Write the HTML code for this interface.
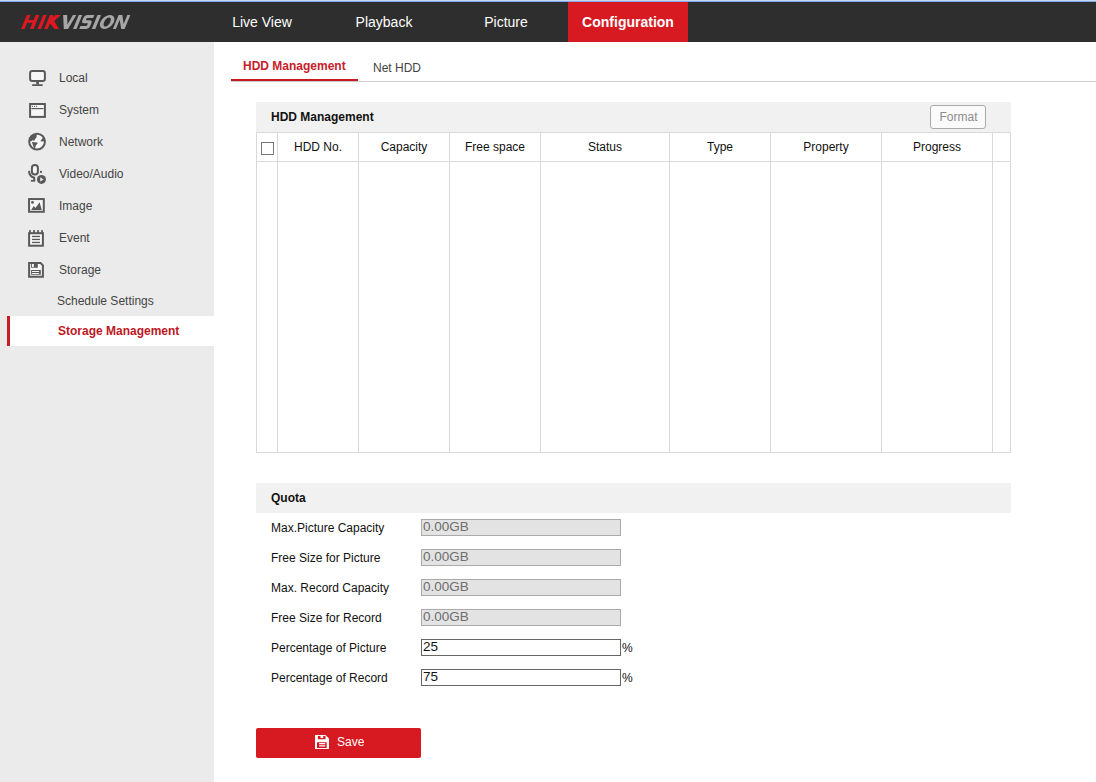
<!DOCTYPE html>
<html><head><meta charset="utf-8">
<style>
*{margin:0;padding:0;box-sizing:border-box}
html,body{width:1096px;height:782px;overflow:hidden;background:#fff;font-family:"Liberation Sans",sans-serif;font-size:12px;color:#333}
.abs{position:absolute}
#topline{left:0;top:0;width:1096px;height:2px;background:linear-gradient(#c9d7ef 0,#c9d7ef 1px,#80a6f2 1px,#80a6f2 2px)}
#header{left:0;top:2px;width:1096px;height:40px;background:#2e2e2e}
.nav{position:absolute;top:0;height:40px;line-height:40px;color:#fff;font-size:14px;text-align:center}
.nav.active{background:#d71921;font-weight:bold}
#sidebar{left:0;top:42px;width:214px;height:740px;background:#ebebeb}
.mi{position:absolute;left:59px;font-size:12px;color:#444}
.ic{position:absolute;left:28px}
.sub{position:absolute;font-size:12px;color:#444}
#selbar{left:7px;top:316px;width:207px;height:30px;background:#fff}
#selred{left:7px;top:316px;width:3px;height:30px;background:#c81e26}
.tab{position:absolute;font-size:12px}
.panelhead{position:absolute;left:256px;width:755px;height:30px;background:#f1f1f1}
.ptitle{position:absolute;left:15px;top:0;line-height:30px;font-weight:bold;color:#111}
.th{position:absolute;top:132px;height:30px;line-height:30px;text-align:center;color:#111}
.vl{position:absolute;top:132px;width:1px;height:320px;background:#d9d9d9}
.lbl{position:absolute;left:271px;color:#111}
.inp{position:absolute;left:421px;width:200px;height:17px;border:1px solid #aaa;background:#e3e3e3;color:#6e6e6e;font-size:13.5px;line-height:14px;padding-left:1px}
.inp.w{background:#fff;border-color:#666;color:#111}
.pct{position:absolute;left:622px;color:#111;font-size:12px}
</style></head><body>
<div id="topline" class="abs"></div>
<div id="header" class="abs">
  <svg class="abs" style="left:0;top:-2px" width="140" height="44" viewBox="0 0 140 44">
    <g transform="matrix(1,0,-0.41,1,5.74,15)">
      <g fill="#dc1820">
        <polygon points="21.1,0 24.7,0 24.7,4.9 29.9,4.9 29.9,0 33.6,0 33.6,14 29.9,14 29.9,7.8 24.7,7.8 24.7,14 21.1,14"/>
        <polygon points="37.5,0 41,0 41,14 37.5,14"/>
        <polygon points="44.2,0 47.8,0 47.8,2.3 50,0 55.3,0 50.9,6 59,14 54.6,14 47.8,8.6 47.8,14 44.2,14"/>
      </g>
      <g fill="#a6a6a6">
        <polygon points="57.4,0 61.4,0 65.6,9.6 67.2,0 70.6,0 68,14 63.8,14"/>
        <polygon points="73,0 76.5,0 76.5,14 73,14"/>
        <path d="M88.6,0 L81.5,0 Q78.8,0 78.8,2.7 L78.8,5.3 Q78.8,8.3 81.8,8.3 L85.5,8.3 Q85.6,8.3 85.6,9.3 L85.6,10.2 Q85.6,11 84.8,11 L79.2,11 L79.2,14 L86.4,14 Q89,14 89,11.3 L89,8.3 Q89,5.3 86,5.3 L82.8,5.3 Q82.2,5.3 82.2,4.5 L82.2,3.8 Q82.2,3 83,3 L88.6,3 Z"/>
        <polygon points="91.8,0 95.3,0 95.3,14 91.8,14"/>
        <path fill-rule="evenodd" d="M104.3,0 A6.7,7 0 1 1 104.29,0 Z M104.3,2.4 A3.1,4.6 0 1 0 104.31,2.4 Z"/>
        <polygon points="112.9,0 116.6,0 121.6,9 121.6,0 124.6,0 124.6,14 121.2,14 115.9,4.8 115.9,14 112.9,14"/>
      </g>
    </g>
  </svg>
  <div class="nav" style="left:202px;width:120px">Live View</div>
  <div class="nav" style="left:324px;width:120px">Playback</div>
  <div class="nav" style="left:446px;width:120px">Picture</div>
  <div class="nav active" style="left:568px;width:120px">Configuration</div>
</div>
<div id="sidebar" class="abs"></div>
<div id="selbar" class="abs"></div>
<div id="selred" class="abs"></div>

<svg class="abs" style="left:0;top:0" width="60" height="300" viewBox="0 0 60 300">
  <g fill="#f6f6f6" stroke="#595959" stroke-width="2">
    <rect x="30.1" y="70.9" width="14.8" height="10.1" rx="2.2"/>
    <rect x="30.1" y="104" width="14.8" height="12.9"/>
    <circle cx="37.05" cy="141.6" r="7.9"/>
    <rect x="31.9" y="165" width="6" height="9.6" rx="3"/>
    <path fill="none" d="M29,170.9 Q29.3,176.5 34.2,177.8 L34.2,180.6"/>
    <rect x="29.05" y="199.05" width="14.75" height="12.7"/>
    <rect x="29.1" y="233.2" width="13.8" height="12.5"/>
    <path d="M29.1,262.95 L40.6,262.95 L42.9,265.4 L42.9,276.7 L29.1,276.7 Z"/>
  </g>
  <g fill="#595959">
    <rect x="36.2" y="81.5" width="2.7" height="3"/>
    <rect x="32" y="84.2" width="10.9" height="1.8" rx="0.9"/>
    <rect x="31.5" y="108" width="12" height="1.2"/>
    <circle cx="32.5" cy="106.3" r="0.65"/><circle cx="34.5" cy="106.3" r="0.65"/><circle cx="36.6" cy="106.3" r="0.65"/>
    <path d="M29.5,139.8 L31,136.2 L33.5,134.2 L35.5,134 L36.8,135.6 L36.4,137.4 L35,139.3 L34.2,140.7 L32.4,140.3 L31.6,141 L30.1,141.4 Z"/>
    <path d="M31.9,142 L37.3,142.6 L37.6,143.5 L35.9,145.2 L35.4,146.9 L34.8,148.6 L33.6,146.9 L32.5,144.1 Z"/>
    <path d="M42.9,137.6 L44.8,139 L44.6,141.3 L41.2,141.6 L40.4,141 L41.8,139.3 Z"/>
    <rect x="30.9" y="180" width="4.3" height="1.7"/>
    <rect x="40" y="170.9" width="2" height="1.9"/>
  </g>
  <circle cx="41.45" cy="179.4" r="5.3" fill="#ebebeb"/>
  <circle cx="41.45" cy="179.4" r="4.5" fill="#595959"/>
  <polygon points="40.2,177.2 43.6,179.4 40.2,181.6" fill="#ebebeb"/>
  <g fill="#595959">
    <circle cx="32.5" cy="202.4" r="1.4"/>
    <polygon points="31.1,209.9 33.9,206 35.5,208 39.6,202.2 41.8,209.9"/>
    <rect x="29.1" y="230.1" width="1.7" height="3"/><rect x="33.2" y="230.1" width="1.7" height="3"/><rect x="37.2" y="230.1" width="1.7" height="3"/><rect x="41.2" y="230.1" width="1.7" height="3"/>
    <rect x="32.05" y="235.8" width="7.9" height="1.3"/><rect x="32.05" y="238.8" width="7.9" height="1.3"/><rect x="32.05" y="241.8" width="7.9" height="1.3"/>
    <path fill-rule="evenodd" d="M31.1,262.9 L37.8,262.9 L37.8,267.7 L31.1,267.7 Z M32,263.9 L33.9,263.9 L33.9,266.9 L32,266.9 Z"/>
    <path fill-rule="evenodd" d="M31.1,270.1 L40.8,270.1 L40.8,274.8 L31.1,274.8 Z M32,270.9 L39.1,270.9 L39.1,271.9 L32,271.9 Z M32,273 L39.1,273 L39.1,274 L32,274 Z"/>
  </g>
</svg>
<div class="mi" style="top:71px">Local</div>
<div class="mi" style="top:103px">System</div>
<div class="mi" style="top:135px">Network</div>
<div class="mi" style="top:167px">Video/Audio</div>
<div class="mi" style="top:199px">Image</div>
<div class="mi" style="top:231px">Event</div>
<div class="mi" style="top:263px">Storage</div>
<div class="sub" style="left:57px;top:294px">Schedule Settings</div>
<div class="sub" style="left:58px;top:324px;color:#c0171f;font-weight:bold">Storage Management</div>

<!-- tabs -->
<div class="tab" style="left:243px;top:59px;color:#c8202b;font-weight:bold">HDD Management</div>
<div class="tab" style="left:373px;top:61px;color:#444">Net HDD</div>
<div class="abs" style="left:231px;top:81px;width:865px;height:1px;background:#ccc"></div>
<div class="abs" style="left:231px;top:79px;width:127px;height:2px;background:#c8171e"></div>

<!-- HDD panel -->
<div class="panelhead" style="top:102px"><div class="ptitle">HDD Management</div>
  <div class="abs" style="left:674px;top:3px;width:56px;height:24px;border:1px solid #aaa;border-radius:3px;background:#fafafa;color:#8c8c8c;text-align:center;line-height:21px;padding-top:1px;padding-left:1px">Format</div>
</div>
<div class="abs" style="left:256px;top:132px;width:755px;height:321px;border:1px solid #d9d9d9"></div>
<div class="abs" style="left:256px;top:161px;width:755px;height:1px;background:#d9d9d9"></div>
<div class="vl" style="left:277px"></div>
<div class="vl" style="left:358px"></div>
<div class="vl" style="left:449px"></div>
<div class="vl" style="left:540px"></div>
<div class="vl" style="left:669px"></div>
<div class="vl" style="left:770px"></div>
<div class="vl" style="left:881px"></div>
<div class="vl" style="left:992px"></div>
<div class="abs" style="left:261px;top:142px;width:13px;height:13px;border:1px solid #777;background:#fff"></div>
<div class="th" style="left:278px;width:80px">HDD No.</div>
<div class="th" style="left:359px;width:90px">Capacity</div>
<div class="th" style="left:450px;width:90px">Free space</div>
<div class="th" style="left:541px;width:128px">Status</div>
<div class="th" style="left:670px;width:100px">Type</div>
<div class="th" style="left:771px;width:110px">Property</div>
<div class="th" style="left:882px;width:110px">Progress</div>

<!-- Quota -->
<div class="panelhead" style="top:483px"><div class="ptitle">Quota</div></div>
<div class="lbl" style="top:521px">Max.Picture Capacity</div>
<div class="inp" style="top:519px">0.00GB</div>
<div class="lbl" style="top:551px">Free Size for Picture</div>
<div class="inp" style="top:549px">0.00GB</div>
<div class="lbl" style="top:581px">Max. Record Capacity</div>
<div class="inp" style="top:579px">0.00GB</div>
<div class="lbl" style="top:611px">Free Size for Record</div>
<div class="inp" style="top:609px">0.00GB</div>
<div class="lbl" style="top:641px">Percentage of Picture</div>
<div class="inp w" style="top:639px">25</div>
<div class="pct" style="top:641px">%</div>
<div class="lbl" style="top:671px">Percentage of Record</div>
<div class="inp w" style="top:669px">75</div>
<div class="pct" style="top:671px">%</div>

<!-- Save -->
<div class="abs" style="left:256px;top:728px;width:165px;height:30px;background:#d71921;border-radius:2px;color:#fff;font-size:12px">
  <svg class="abs" style="left:0;top:0" width="165" height="30" viewBox="256 728 165 30">
    <path fill="#fff" d="M315,735 L325.5,735 L329,738.5 L329,749 L315,749 Z"/>
    <g fill="#d71921">
      <path fill-rule="evenodd" d="M317.9,736 L325.5,736 L325.5,739.3 L317.9,739.3 Z M320.5,736 L323.2,736 L323.2,737.9 L320.5,737.9 Z"/>
      <path fill-rule="evenodd" d="M317,742.3 L326.7,742.3 L326.7,747.9 L317,747.9 Z M319.1,743.1 L325.2,743.1 L325.2,744.3 L319.1,744.3 Z M319.1,745.2 L325.2,745.2 L325.2,746.4 L319.1,746.4 Z"/>
    </g>
  </svg>
  <span class="abs" style="left:81px;top:7px">Save</span>
</div>
</body></html>
